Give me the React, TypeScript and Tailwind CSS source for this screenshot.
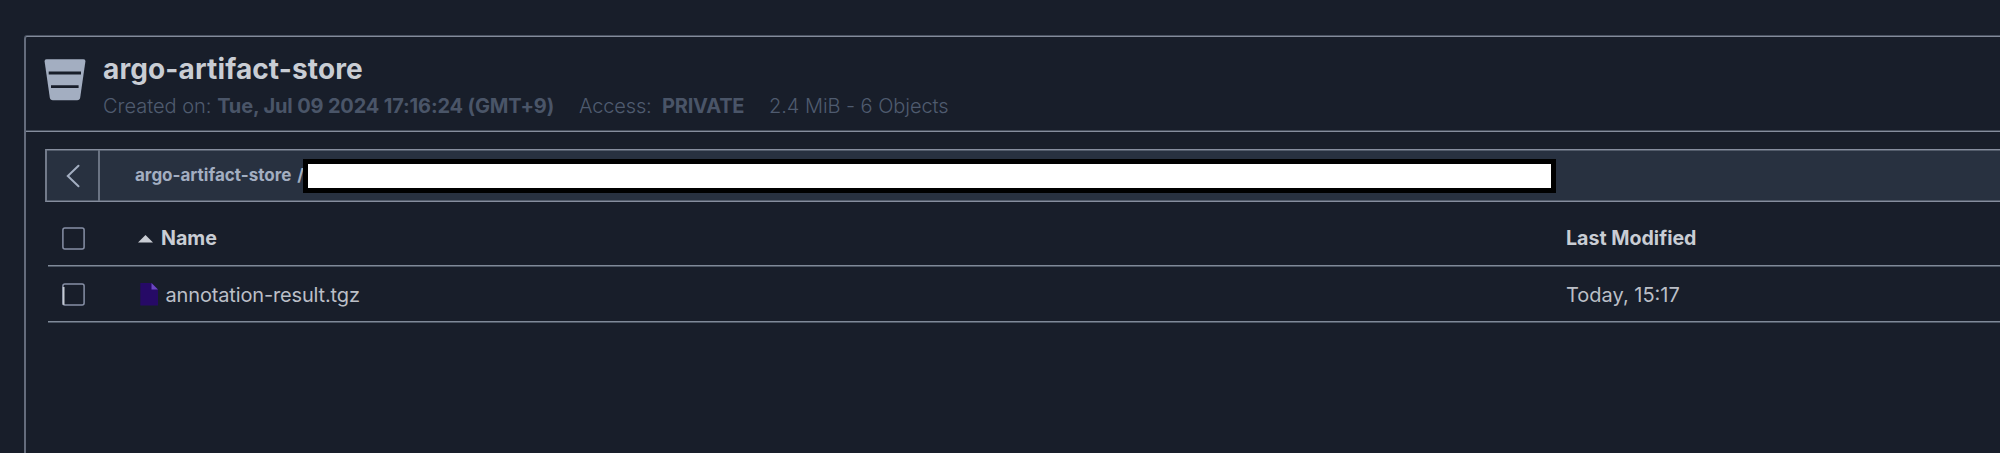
import React from "react";

function BucketIcon() {
  return (
    <svg width="42" height="42" viewBox="0 0 42 42" className="block shrink-0">
      <path d="M2.5 0.3H39.5Q41.7 0.3 41.4 2.6L36.2 38.6Q35.8 41.3 33.2 41.3H8.8Q6.2 41.3 5.8 38.6L0.6 2.6Q0.3 0.3 2.5 0.3Z" fill="#a3aec1" />
      <path d="M4.7 12.6H37V15.4H4.7ZM7 26.2H34.6V29H7Z" fill="#181e2a" />
    </svg>
  );
}

function Checkbox({ marked = false }: { marked?: boolean }) {
  return (
    <svg width="23" height="23" viewBox="0 0 23 23" className="block shrink-0">
      <rect x="0.9" y="0.9" width="21.2" height="21.2" rx="2" fill="none" stroke="#8790a6" strokeWidth="1.5" />
      {marked && <path d="M1.6 4V21.8" stroke="#c5cad3" strokeWidth="1.8" />}
    </svg>
  );
}

function FileIcon() {
  return (
    <svg width="18" height="23" viewBox="0 0 18 23" className="block shrink-0">
      <path d="M0.3 0H11.5L18 6.5V22.5H0.3Z" fill="#260a66" />
      <path d="M11.5 0L18 6.5H11.5Z" fill="#6b46c1" />
    </svg>
  );
}

export default function App() {
  return (
    <div className="h-[453px] w-[2000px] overflow-hidden bg-[#181e2a] pt-[36px] pl-[24px] font-['Inter',sans-serif]">
      <div className="h-[417px] rounded-tl-[3px] border-t border-l-2 border-t-[#838b9b] border-l-[#646c7c] shadow-[0_-1px_0_#4b5362]">
        <header className="flex h-[95px] border-b border-[#868e9e] pt-[22px] pl-[18px] shadow-[inset_0_-1px_0_#454d5b]">
          <BucketIcon />
          <div className="ml-[17px] whitespace-nowrap">
            <h1 className="mt-[-8px] h-[36px] text-[28px] leading-[36px] font-bold tracking-[0.13px] text-[#c9cdd4]">argo-artifact-store</h1>
            <div className="mt-[5px] flex h-[28px] text-[20px] leading-[28px] font-light text-[#4f5b6f]">
              <span className="w-[476px]">Created on: <b className="font-bold tracking-[-0.15px] text-[#4a5568]">Tue, Jul 09 2024 17:16:24 (GMT+9)</b></span>
              <span className="w-[83px] tracking-[-0.15px]">Access:</span>
              <b className="w-[107px] font-bold tracking-[-0.2px] text-[#4a5568]">PRIVATE</b>
              <span className="tracking-[-0.05px]">2.4 MiB - 6 Objects</span>
            </div>
          </div>
        </header>
        <main className="pt-[17px] pl-[19px]">
          <nav className="flex h-[53px] items-center border-y border-l-2 border-y-[#868e9e] border-l-[#727a8a] bg-[#283140] shadow-[inset_0_1px_0_#535c6b,inset_0_-1px_0_#535c6b]">
            <button className="flex h-full w-[53px] items-center justify-center border-r-2 border-[#6b7484]">
              <svg width="14" height="24" viewBox="0 0 14 24" className="block" fill="none" stroke="#a3aec1" strokeWidth="2" strokeLinecap="round">
                <path d="M12.5 1.8L1.8 12L12.5 22.2" />
              </svg>
            </button>
            <span className="ml-[35px] w-[168px] text-[17px] font-bold whitespace-nowrap text-[#a3aec1]">argo-artifact-store <span className="ml-[2px]">/</span></span>
            <span className="h-[34px] w-[1253px] border-5 border-black bg-white" />
          </nav>
          <div className="ml-[3px]">
            <div className="mb-px flex h-[64px] items-center border-b border-[#808a99] pt-[10px] pl-[14px] text-[19.6px] font-bold text-[#c9cdd4] shadow-[0_1px_0_#4b5563]">
              <Checkbox />
              <svg width="15" height="8" viewBox="0 0 15 8" className="ml-[53px] block fill-current"><path d="M0 7.5L7.5 0L15 7.5Z" /></svg>
              <span className="ml-[8px] w-[1405px]">Name</span>
              <span>Last Modified</span>
            </div>
            <div className="mb-px flex h-[55px] items-center border-b border-[#808a99] pt-px pl-[14px] text-[20px] text-[#bbbfc7] shadow-[0_1px_0_#4b5563]">
              <Checkbox marked />
              <span className="ml-[55px]"><FileIcon /></span>
              <span className="ml-[7.5px] w-[1400.5px] tracking-[-0.15px]">annotation-result.tgz</span>
              <span>Today, 15:17</span>
            </div>
          </div>
        </main>
      </div>
    </div>
  );
}
